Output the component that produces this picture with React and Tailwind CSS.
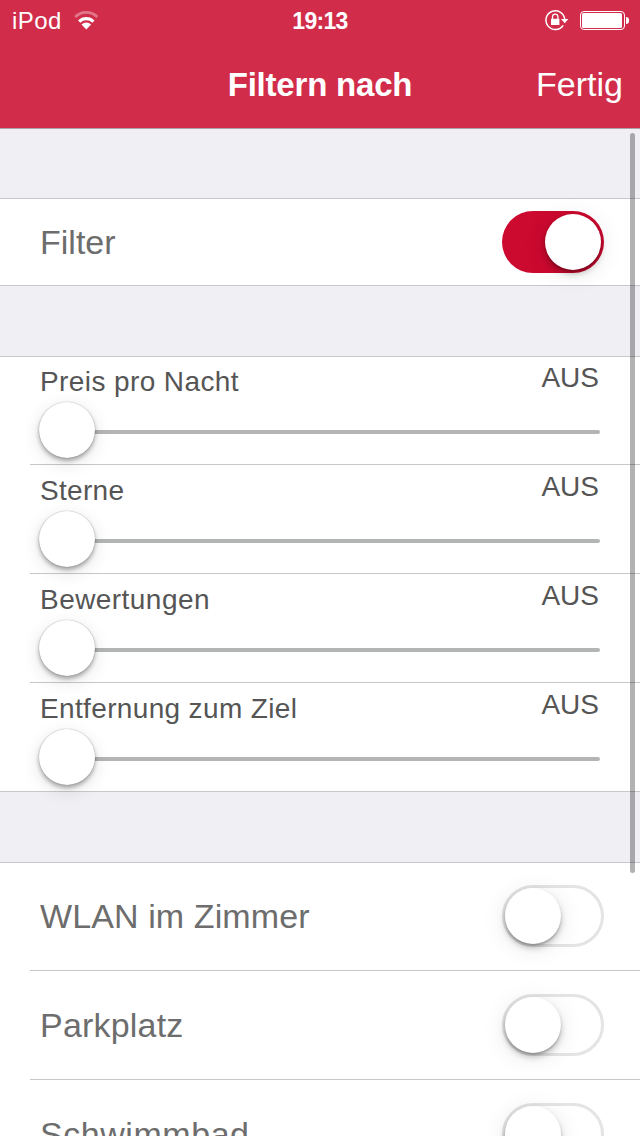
import React, { useState } from 'react';

const SLIDERS = [
  { label: 'Preis pro Nacht', className: 'tracking-[0.4px]' },
  { label: 'Sterne', className: 'tracking-[0.3px]' },
  { label: 'Bewertungen', className: 'tracking-[0.45px]' },
  { label: 'Entfernung zum Ziel', className: 'tracking-[0.35px]' },
];

const AMENITIES = [
  { label: 'WLAN im Zimmer', className: 'tracking-[0.1px]' },
  { label: 'Parkplatz', className: 'tracking-[0.2px]' },
  { label: 'Schwimmbad', className: 'tracking-[0.55px]' },
];

function WifiIcon() {
  return (
    <svg width="26" height="20" viewBox="0 0 26 20" fill="none">
      <path d="M2.2 7.1a15.6 15.6 0 0 1 22.2 0" stroke="white" strokeOpacity="0.35" strokeWidth="2.8" />
      <path d="M6.2 11.6a10 10 0 0 1 14.2 0" stroke="white" strokeWidth="3.2" />
      <path d="M13.3 19.4l-4.8-4.8a6.8 6.8 0 0 1 9.6 0z" fill="white" />
    </svg>
  );
}

function RotationLockIcon() {
  return (
    <svg width="24" height="22" viewBox="0 0 24 22" fill="none">
      <path d="M18.2 16.3a9.4 9.4 0 1 1 1.5-6.1" stroke="white" strokeWidth="1.5" />
      <path d="M16 10h7.4l-3.7 4.2z" fill="white" />
      <rect x="6" y="9.8" width="8.4" height="6.2" fill="white" />
      <path d="M7.5 10V7.8a2.7 2.7 0 0 1 5.4 0V10" stroke="white" strokeWidth="1.3" />
    </svg>
  );
}

function Battery() {
  return (
    <div className="flex items-center">
      <div className="h-[19px] w-[45px] rounded-[4px] border border-white p-px">
        <div className="h-full w-[40px] rounded-[1.5px] bg-white" />
      </div>
      <div className="ml-px h-[7px] w-[3px] rounded-r-[3px] bg-white" />
    </div>
  );
}

function Toggle({ defaultOn = false }) {
  const [on, setOn] = useState(defaultOn);
  return (
    <button
      type="button"
      role="switch"
      aria-checked={on}
      onClick={() => setOn(!on)}
      className={
        on
          ? 'flex h-[62px] w-[102px] items-center justify-end rounded-full bg-[#cc092f] px-[3px]'
          : 'flex h-[62px] w-[102px] items-center rounded-full border-3 border-[#e4e4e4] bg-white'
      }
    >
      <span className="size-14 rounded-full bg-white shadow-[0_4px_6px_rgba(0,0,0,0.22),0_2px_2px_rgba(0,0,0,0.18),0_4px_24px_rgba(0,0,0,0.1)]" />
    </button>
  );
}

function SliderRow({ label, className, last }) {
  return (
    <div className={last ? 'h-[108px]' : 'ml-[30px] h-[109px] border-b border-[#c8c7cc] first:-mt-px'}>
      <div className={last ? 'pr-10 pl-10' : 'pr-10 pl-[10px]'}>
        <div className="flex h-[46px] items-start justify-between text-[28px] leading-[32px] text-[#555]">
          <span className={`pt-[10px] ${className}`}>{label}</span>
          <span className="pt-[6px] pr-px">AUS</span>
        </div>
        <div className="-ml-px flex h-14 items-center">
          <div className="z-10 size-14 shrink-0 rounded-full bg-white shadow-[0_0_0_0.5px_rgba(0,0,0,0.06),0_0_1px_rgba(0,0,0,0.25),0_3px_4px_rgba(0,0,0,0.3),0_5px_18px_rgba(0,0,0,0.12)]" />
          <div className="mt-[4px] -ml-1 h-1 flex-1 rounded-full bg-[#b3b4b4]" />
        </div>
      </div>
    </div>
  );
}

export default function App() {
  return (
    <div className="relative h-[1136px] w-[640px] overflow-hidden bg-[#efeff4] font-['Liberation_Sans',Arial,sans-serif]">
      <header className="h-[129px] border-b border-[#aaa2a7] bg-[#d12d4b] text-white">
        {/* Status bar */}
        <div className="grid h-10 grid-cols-3 items-center pr-[11px] pl-3">
          <div className="flex items-center gap-[11px] text-2xl">
            <span className="pt-[2px] tracking-[0.4px]">iPod</span>
            <WifiIcon />
          </div>
          <span className="pt-[2px] pr-px text-center text-[23px] font-bold tracking-[-0.7px]">19:13</span>
          <div className="flex items-center justify-end gap-[11px]">
            <RotationLockIcon />
            <Battery />
          </div>
        </div>

        {/* Navigation bar */}
        <div className="grid h-[88px] grid-cols-[1fr_auto_1fr] items-center px-[17px] text-[34px]">
          <span />
          <h1 className="pt-[2px] text-[33px] font-bold tracking-[-0.2px]">Filtern nach</h1>
          <button type="button" className="text-right">Fertig</button>
        </div>
      </header>

      <main>
        <section className="mt-[69px] flex h-[88px] items-center justify-between border-y border-[#c8c7cc] bg-white pr-9 pl-10">
          <span className="text-[34px] text-[#6d6d6d]">Filter</span>
          <Toggle defaultOn />
        </section>

        <section className="mt-[70px] border-y border-[#c8c7cc] bg-white">
          {SLIDERS.map((item, i) => (
            <SliderRow key={item.label} {...item} last={i === SLIDERS.length - 1} />
          ))}
        </section>

        <section className="mt-[70px] border-t border-[#c8c7cc] bg-white">
          {AMENITIES.map((item) => (
            <div
              key={item.label}
              className="ml-[30px] flex h-[109px] items-center justify-between border-b border-[#c8c7cc] pr-9 pl-[10px] first:-mt-px"
            >
              <span className={`text-[34px] text-[#6d6d6d] ${item.className}`}>{item.label}</span>
              <Toggle />
            </div>
          ))}
        </section>
      </main>

      {/* Scroll indicator */}
      <div className="absolute top-[133px] right-[5px] z-20 h-[740px] w-[5px] rounded-full bg-black/30" />
    </div>
  );
}
